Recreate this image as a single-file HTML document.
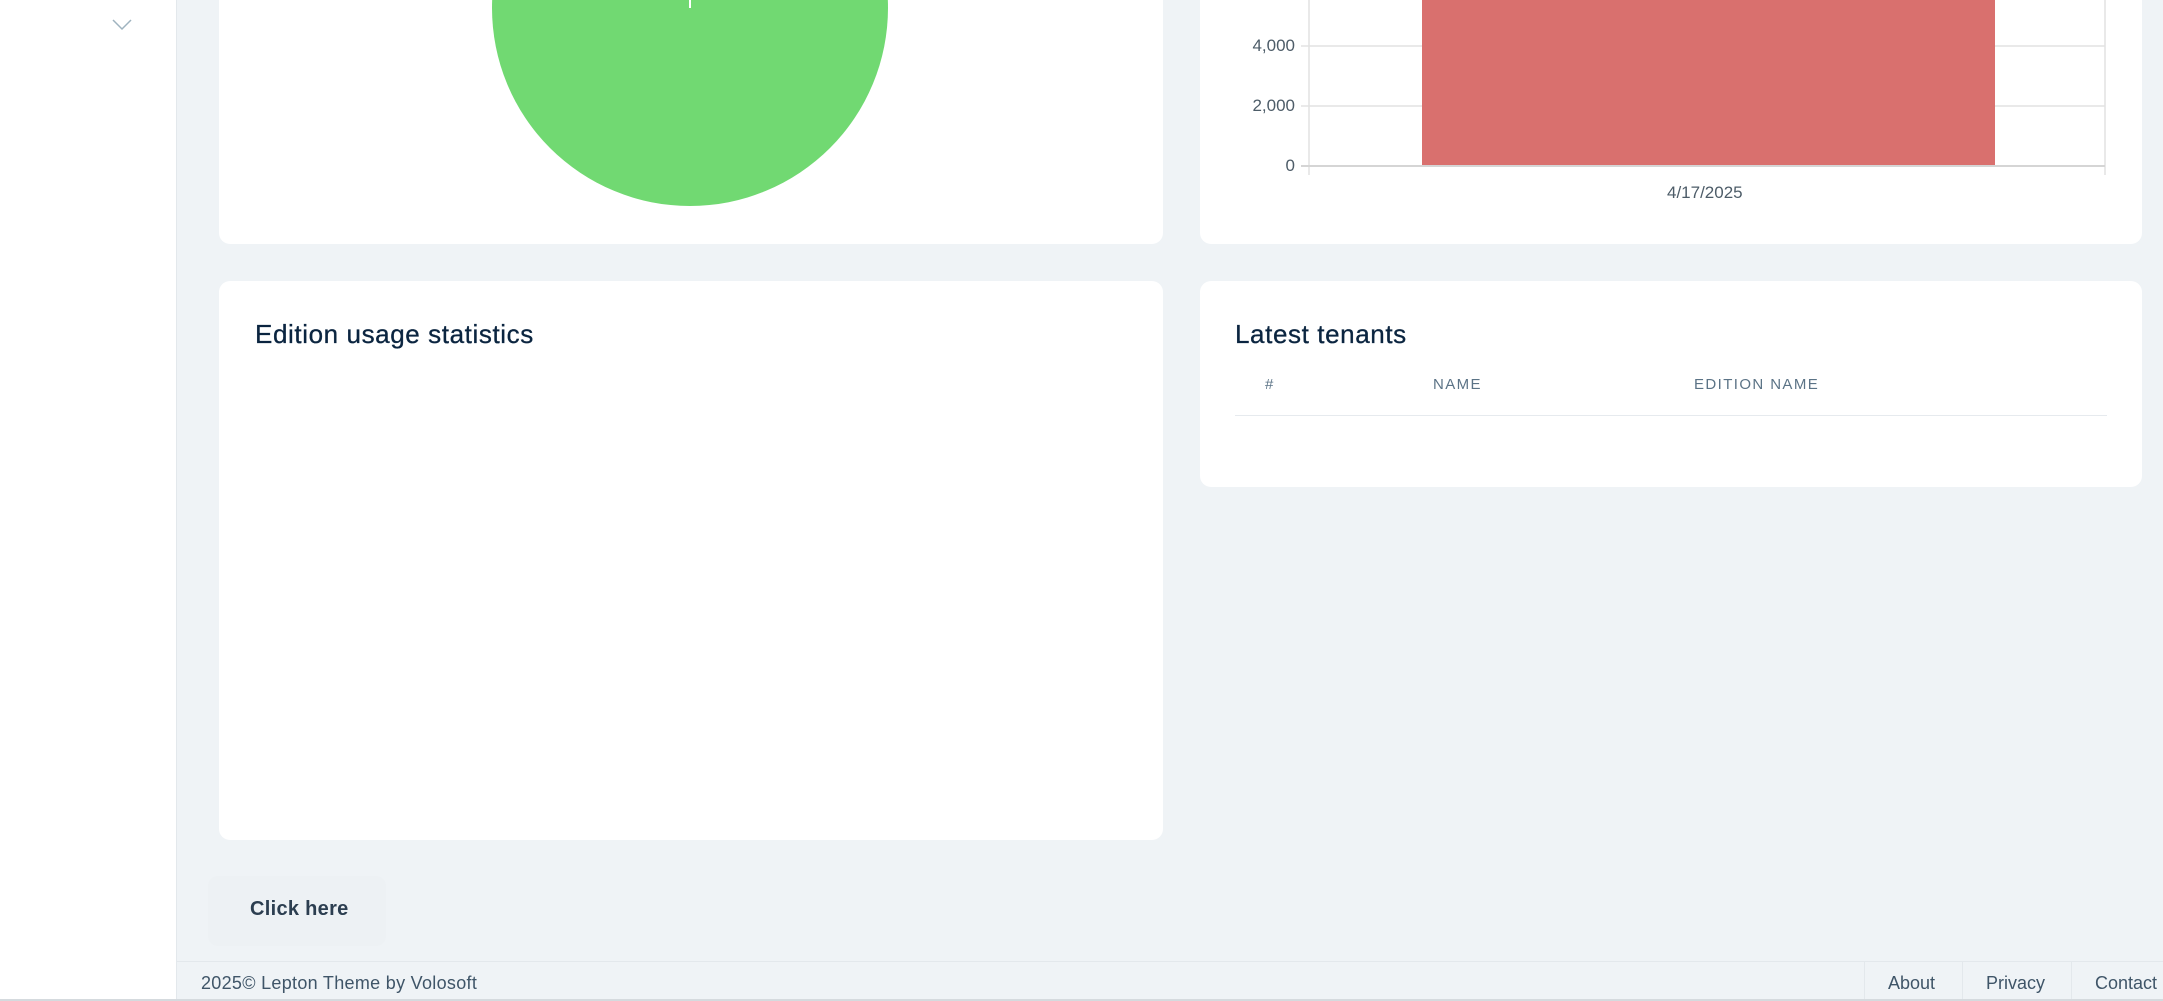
<!DOCTYPE html>
<html><head><meta charset="utf-8"><style>
*{margin:0;padding:0;box-sizing:border-box}
body{width:2163px;height:1001px;background:#eff3f6;font-family:"Liberation Sans",sans-serif;position:relative;overflow:hidden;color:#062a44}
.side{position:absolute;left:0;top:0;width:177px;height:1001px;background:#fff;border-right:1px solid #e3e8ec}
.card{position:absolute;background:#fff;border-radius:11px}
.title{position:absolute;font-size:26px;letter-spacing:0.6px;color:#0b2540;-webkit-text-stroke:0.3px #0b2540}
.th{position:absolute;top:376px;font-size:15px;letter-spacing:1.4px;color:#5b7386}
.ax{position:absolute;font-size:17px;color:#4d5c68;text-align:right;width:60px}
.foot{position:absolute;left:177px;top:961px;width:1986px;height:39px;border-top:1px solid #e3e8ec;font-size:18px;color:#3f5568}
.foot span{position:absolute;top:11px}
.sep{position:absolute;top:0;width:1px;height:39px;background:#e3e8ec}
</style></head><body>
<div class="side">
<svg style="position:absolute;left:112px;top:19px" width="20" height="12" viewBox="0 0 20 12"><path d="M1 1 L10 10 L19 1" fill="none" stroke="#9fb3bf" stroke-width="1.5"/></svg>
</div>
<div class="card" style="left:219px;top:-20px;width:944px;height:264px;overflow:hidden">
<svg style="position:absolute;left:0;top:0" width="944" height="264"><circle cx="471" cy="28" r="198" fill="#71d972"/><line x1="471" y1="0" x2="471" y2="28" stroke="#fff" stroke-width="2"/></svg>
</div>
<div class="card" style="left:1200px;top:-20px;width:942px;height:264px"></div>
<svg style="position:absolute;left:1200px;top:0" width="942" height="244">
<g stroke="#e2e2e2" stroke-width="1.5"><line x1="109" y1="46" x2="905" y2="46"/><line x1="109" y1="106" x2="905" y2="106"/><line x1="109" y1="0" x2="109" y2="175"/><line x1="905" y1="0" x2="905" y2="175"/><line x1="101" y1="46" x2="109" y2="46"/><line x1="101" y1="106" x2="109" y2="106"/><line x1="101" y1="166" x2="109" y2="166"/></g>
<rect x="222" y="0" width="573" height="166" fill="#d9706e"/>
<line x1="101" y1="166" x2="905" y2="166" stroke="#d5d5d5" stroke-width="2"/>
</svg>
<div class="ax" style="left:1235px;top:36px">4,000</div>
<div class="ax" style="left:1235px;top:96px">2,000</div>
<div class="ax" style="left:1235px;top:156px">0</div>
<div style="position:absolute;left:1667px;top:183px;font-size:17px;color:#4d5c68">4/17/2025</div>
<div class="card" style="left:219px;top:281px;width:944px;height:559px"><div class="title" style="left:36px;top:38px">Edition usage statistics</div></div>
<div class="card" style="left:1200px;top:281px;width:942px;height:206px"><div class="title" style="left:35px;top:38px">Latest tenants</div>
<div style="position:absolute;left:35px;top:134px;width:872px;height:1px;background:#e6eaee"></div></div>
<div class="th" style="left:1265px">#</div>
<div class="th" style="left:1433px">NAME</div>
<div class="th" style="left:1694px">EDITION NAME</div>
<div style="position:absolute;left:208px;top:876px;width:178px;height:70px;border-radius:10px;background:#edf1f4"></div>
<div style="position:absolute;left:250px;top:898px;font-size:20px;font-weight:bold;color:#2c3e50;letter-spacing:0.3px">Click here</div>
<div class="foot">
<span style="left:24px;letter-spacing:0.3px">2025© Lepton Theme by Volosoft</span>
<div class="sep" style="left:1687px"></div><div class="sep" style="left:1785px"></div><div class="sep" style="left:1894px"></div>
<span style="left:1711px">About</span><span style="left:1809px">Privacy</span><span style="left:1918px">Contact</span>
</div>
<div style="position:absolute;left:0;top:999px;width:2163px;height:2px;background:#d5dade"></div>
</body></html>
